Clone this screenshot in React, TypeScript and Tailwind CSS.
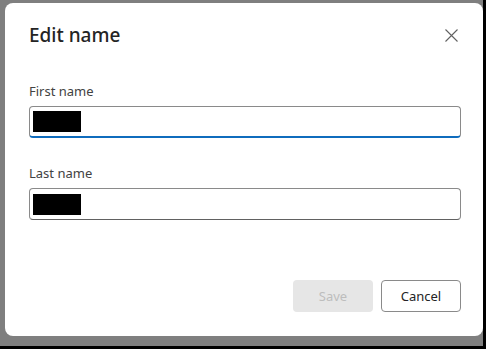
export default function App() {
  const fields = ["First name", "Last name"];
  return (
    <div
      className="w-[486px] h-[349px] bg-[#7f7f7f] border-r-[3px] border-b-[3px] border-black pl-[5px] pt-[3px] pb-[10px]"
      style={{ fontFamily: '"Noto Sans", "Open Sans", sans-serif' }}
    >
      <div className="w-[478px] h-[333px] bg-white rounded-lg flex flex-col pl-6 pr-[22px] pt-[18px] pb-6">
        <div className="flex items-start justify-between">
          <h1 className="text-[19px] leading-7 font-medium text-[#242424]">Edit name</h1>
          <button className="mt-[8px] mr-[3px] text-[#616161]">
            <svg width="13" height="13" viewBox="0 0 13 13">
              <path d="M0.5 0.5 L12.5 12.5 M12.5 0.5 L0.5 12.5" stroke="currentColor" strokeWidth="1.1" />
            </svg>
          </button>
        </div>
        <div className="flex flex-col gap-[25px] mt-[32px]">
          {fields.map((f, i) => (
            <div key={f} className="flex flex-col">
              <label className="text-[13px] leading-5 text-[#424242] mb-[5px]">{f}</label>
              <div
                className={`h-[32px] rounded border border-[#8a8a8a] ${
                  i == 0 ? "border-b-2 border-b-[#0f6cbd]" : "border-b-[#616161]"
                } flex items-center pl-[3px]`}
              >
                <div className="w-[48px] h-[21px] bg-black"></div>
              </div>
            </div>
          ))}
        </div>
        <div className="mt-auto flex justify-end gap-2">
          <button className="w-[80px] h-[32px] pt-[2px] rounded bg-[#e6e6e6] text-[13px] text-[#bdbdbd]">
            Save
          </button>
          <button className="w-[80px] h-[32px] pt-[2px] rounded border border-[#8a8a8a] bg-white text-[13px] text-[#242424]">
            Cancel
          </button>
        </div>
      </div>
    </div>
  );
}
